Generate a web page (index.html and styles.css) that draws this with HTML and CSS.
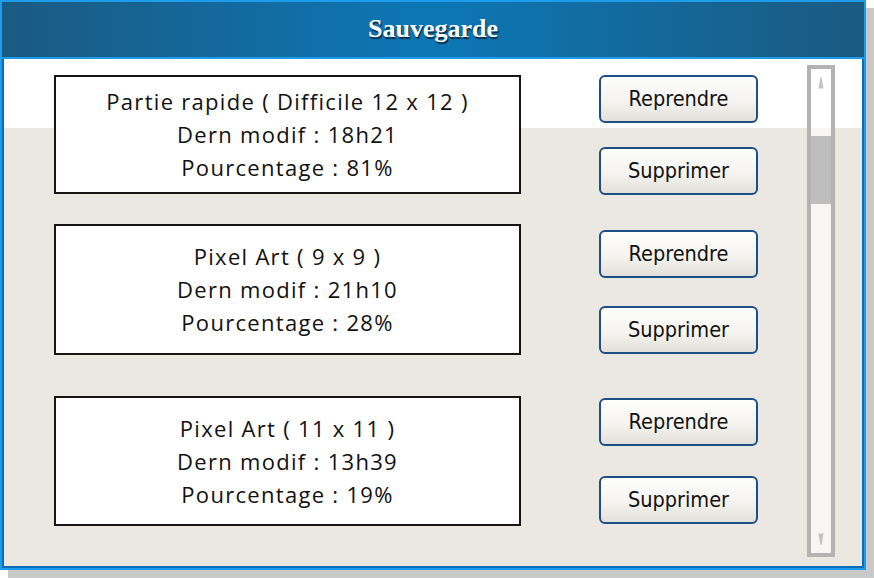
FILE: index.html
```html
<!DOCTYPE html>
<html lang="fr">
<head>
<meta charset="utf-8">
<title>Sauvegarde</title>
<link rel="stylesheet" href="styles.css">
</head>
<body>
<div class="window">
  <div class="titlebar"><h1 class="title">Sauvegarde</h1></div>
  <div class="content">
    <div class="list">
      <div class="row row--a">
        <div class="card card--a">
          <p>Partie rapide ( Difficile 12 x 12 )</p>
          <p>Dern modif : 18h21</p>
          <p>Pourcentage : 81%</p>
        </div>
        <div class="actions">
          <button class="btn">Reprendre</button>
          <button class="btn">Supprimer</button>
        </div>
      </div>
      <div class="row row--b">
        <div class="card card--b">
          <p>Pixel Art ( 9 x 9 )</p>
          <p>Dern modif : 21h10</p>
          <p>Pourcentage : 28%</p>
        </div>
        <div class="actions">
          <button class="btn">Reprendre</button>
          <button class="btn">Supprimer</button>
        </div>
      </div>
      <div class="row row--c">
        <div class="card card--c">
          <p>Pixel Art ( 11 x 11 )</p>
          <p>Dern modif : 13h39</p>
          <p>Pourcentage : 19%</p>
        </div>
        <div class="actions">
          <button class="btn">Reprendre</button>
          <button class="btn">Supprimer</button>
        </div>
      </div>
    </div>
    <div class="scrollbar">
      <svg class="arrow" width="6" height="12" viewBox="0 0 6 12"><path d="M2.3 0.5 Q3 0 3.7 0.5 L5.5 11.5 L0.5 11.5 Z" fill="#c3c3c3"/></svg>
      <div class="thumb"></div>
      <div class="track-space"></div>
      <svg class="arrow arrow--down" width="6" height="12" viewBox="0 0 6 12"><path d="M0.5 0.5 L5.5 0.5 L3.7 11.5 Q3 12 2.3 11.5 Z" fill="#c3c3c3"/></svg>
    </div>
  </div>
</div>
</body>
</html>
```
FILE: styles.css
```css
* { box-sizing: border-box; }
html, body { margin: 0; padding: 0; background: #ffffff; }
body { width: 874px; height: 578px; overflow: hidden; }

.window {
  width: 866px;
  height: 570px;
  border: 2px solid #1e9cec;
  box-shadow: 8px 8px 0 #c9c9c9;
  display: flex;
  flex-direction: column;
  background: #ebe8e2;
}

.titlebar {
  height: 57px;
  flex: none;
  background: linear-gradient(90deg, #1b5a82 0%, #0c77b6 50%, #1b5a80 100%);
  border-bottom: 2px solid #1e9cec;
  display: flex;
  align-items: center;
  justify-content: center;
}

.title {
  margin: 0;
  padding-bottom: 2px;
  font-family: "Liberation Serif", "Times New Roman", serif;
  font-weight: bold;
  font-size: 26px;
  color: #ffffff;
  text-shadow: 1px 2px 1px #0b2b44;
}

.content {
  flex: 1;
  display: flex;
  border: 2px solid #0a6cb6;
  border-top: none;
  background: linear-gradient(#ffffff 0, #ffffff 69px, #ebe8e2 69px);
}

.list {
  width: 803px;
  padding-left: 50px;
  display: flex;
  flex-direction: column;
}

.row {
  display: flex;
  align-items: flex-start;
  gap: 78px;
}
.row--a { margin-top: 16px; }
.row--b { margin-top: 29px; }
.row--c { margin-top: 41px; }

.card {
  width: 467px;
  border: 2px solid #151515;
  background: #ffffff;
  display: flex;
  flex-direction: column;
  align-items: center;
  justify-content: center;
  font-family: "Comic Sans MS", "Open Sans", sans-serif;
  font-size: 22px;
  letter-spacing: 1.3px;
  color: #111111;
}
.card p { margin: 0; line-height: 33px; }
.card--a { height: 119px; }
.card--b { height: 131px; }
.card--c { height: 130px; }

.actions {
  display: flex;
  flex-direction: column;
}
.row--a .actions { gap: 24px; }
.row--b .actions { padding-top: 6px; gap: 28px; }
.row--c .actions { padding-top: 2px; gap: 30px; }

.btn {
  width: 159px;
  height: 48px;
  border: 2px solid #1d4e86;
  border-radius: 6px;
  background: linear-gradient(#fdfdfc 0%, #f5f4f1 55%, #e3e0d8 100%);
  font-family: "DejaVu Sans Condensed", "DejaVu Sans", sans-serif;
  font-size: 21.5px;
  color: #111111;
  padding: 0 0 2px 0;
}

.scrollbar {
  width: 28px;
  margin: 6px 0 9px 0;
  border: 4px solid #b3b3b3;
  background: rgba(255, 255, 255, 0.62);
  display: flex;
  flex-direction: column;
  align-items: center;
}
.arrow { display: block; margin-top: 8px; flex: none; }
.arrow--down { margin-top: 0; margin-bottom: 8px; }
.thumb {
  align-self: stretch;
  height: 68px;
  margin-top: 47px;
  background: #bebebe;
  flex: none;
}
.track-space { flex: 1; }
```
